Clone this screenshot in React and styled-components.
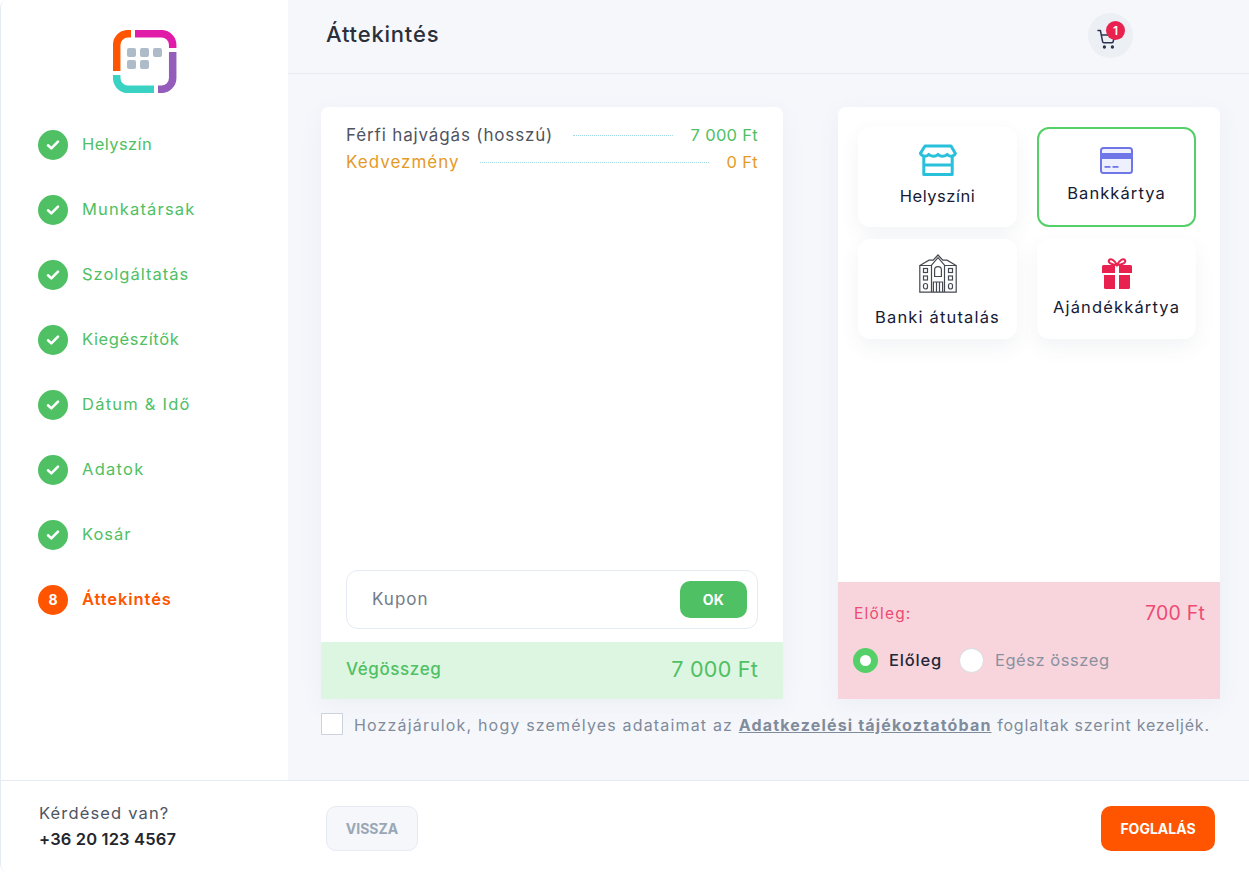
import React from "react";
import styled, { createGlobalStyle } from "styled-components";

const Global = createGlobalStyle`
  html, body { margin: 0; padding: 0; background: #fff; }
  body { font-family: Inter, "Noto Sans", sans-serif; color: #2b2f3a; }
  * { box-sizing: border-box; }
`;

const GREEN = "#4fc063";
const ORANGE = "#ff5500";

const Page = styled.div`
  width: 1249px; height: 872px; display: flex; flex-direction: column;
  overflow: hidden; background: #fff; border-left: 1px solid #e6eaf3;
  border-radius: 8px 0 0 8px;
`;
const Top = styled.div`flex: 0 0 780px; display: flex; min-height: 0;`;
const Sidebar = styled.aside`flex: 0 0 287px; padding-top: 30px; background: #fff;`;
const LogoWrap = styled.div`height: 63px; margin-bottom: 19px; padding-left: 112px;`;
const Steps = styled.div`display: flex; flex-direction: column; padding-left: 37px;`;
const Step = styled.div`height: 65px; display: flex; align-items: center; gap: 14px;`;
const StepDot = styled.span`
  width: 30px; height: 30px; border-radius: 50%; display: flex; align-items: center; justify-content: center;
  background: ${p => (p.$active ? ORANGE : GREEN)}; color: #fff; font-size: 14px; font-weight: 700;
`;
const StepLabel = styled.span`
  font-size: 16.5px; letter-spacing: ${p => p.$spacing}px; white-space: nowrap; padding-bottom: 2px;
  color: ${p => (p.$active ? ORANGE : GREEN)}; font-weight: ${p => (p.$active ? 600 : 400)};
`;

const Main = styled.main`flex: 1; display: flex; flex-direction: column; background: #f5f7fb; min-width: 0;`;
const Header = styled.header`
  flex: 0 0 74px; display: flex; align-items: center; justify-content: space-between;
  padding: 0 116px 3px 38px; border-bottom: 1px solid #e8ebf2;
`;
const Title = styled.h1`margin: 0; padding-bottom: 2px; font-size: 22px; font-weight: 500; color: #2b2f3a; letter-spacing: .8px;`;
const CartButton = styled.div`
  position: relative; width: 45px; height: 45px; border-radius: 50%; background: #eceff3;
  display: flex; align-items: center; justify-content: center; padding: 8px 8px 0 0; color: #2c3350;
`;
const Badge = styled.span`
  position: absolute; left: 18px; top: 8px; width: 19px; height: 19px; border-radius: 50%;
  background: #e8214f; color: #fff; font-size: 12px; font-weight: 600;
  display: flex; align-items: center; justify-content: center;
`;

const Columns = styled.div`display: flex; gap: 55px; padding: 33px 0 0 33px; height: 625px;`;
const Card = styled.section`
  display: flex; flex-direction: column; background: #fff; border-radius: 8px 8px 0 0;
  box-shadow: 0 6px 24px rgba(90, 100, 140, .06);
  width: ${p => p.$width}px;
`;
const Lines = styled.div`flex: 1; padding: 15px 25px 0;`;
const Line = styled.div`
  display: flex; align-items: center; height: 26px; margin-bottom: 1px; font-size: 17px; font-weight: 400;
  color: ${p => p.$color}; letter-spacing: ${p => p.$spacing}px; white-space: nowrap;
`;
const Dots = styled.span`
  flex: 1; height: 0; border-top: 1px dotted #9fd9e6; margin: 0 18px 0 20px;
`;
const Price = styled.span`font-size: 16.5px; letter-spacing: .3px; color: ${p => p.$color};`;

const CouponBox = styled.div`
  margin: 0 25px 13px; height: 59px; border: 1px solid #e6eaf3; border-radius: 12px;
  display: flex; align-items: center; justify-content: space-between; padding: 0 10px 0 25px;
`;
const CouponText = styled.span`font-size: 17px; color: #737b89; letter-spacing: 1px; padding-bottom: 2px;`;
const OkButton = styled.button`
  width: 67px; height: 37px; border: 0; border-radius: 10px; background: ${GREEN}; color: #fff;
  font: 700 14px Inter, sans-serif; letter-spacing: .3px;
`;
const TotalBar = styled.div`
  flex: 0 0 57px; background: #ddf6e2; color: ${GREEN}; display: flex; align-items: center;
  justify-content: space-between; padding: 0 25px 3px;
`;
const TotalLabel = styled.span`font-size: 17px; font-weight: 500; letter-spacing: .6px;`;
const TotalValue = styled.span`font-size: 21.5px; font-weight: 400; letter-spacing: .25px;`;

const Methods = styled.div`
  flex: 1; display: grid; grid-template-columns: 159px 159px; grid-auto-rows: 100px;
  column-gap: 20px; row-gap: 12px; padding: 20px 0 0 20px; align-content: start;
`;
const Method = styled.div`
  border-radius: 12px; background: #fff; display: flex; flex-direction: column; align-items: center;
  padding-top: ${p => p.$top}px; gap: ${p => p.$gap}px;
  border: ${p => (p.$selected ? "2px solid #55d068" : "0")};
  box-shadow: ${p => (p.$selected ? "none" : "0 8px 20px rgba(70, 80, 120, .07)")};
`;
const MethodLabel = styled.span`
  font-size: 16.5px; line-height: 24px; color: #151a35; letter-spacing: ${p => p.$spacing}px; white-space: nowrap;
`;
const Deposit = styled.div`
  flex: 0 0 117px; background: #f8d5dd; padding: 19px 15px 0 16px;
  display: flex; flex-direction: column;
`;
const DepositTop = styled.div`
  display: flex; justify-content: space-between; align-items: center; height: 24px; color: #ee4a72;
`;
const DepositLabel = styled.span`font-size: 15.5px; letter-spacing: 1.2px;`;
const DepositValue = styled.span`font-size: 19.5px; letter-spacing: .2px;`;
const Radios = styled.div`display: flex; align-items: center; margin: 22px 0 0 -1px; height: 26px;`;
const RadioDot = styled.span`
  width: 25px; height: 25px; border-radius: 50%; flex: none; background: #fff;
  border: ${p => (p.$on ? "7px solid #55d068" : "1px solid #d8dbe0")};
`;
const RadioLabel = styled.span`
  margin: 0 17px 0 11px; font-size: 16.5px; white-space: nowrap;
  letter-spacing: ${p => (p.$on ? ".8px" : ".55px")};
  color: ${p => (p.$on ? "#232838" : "#8a919e")}; font-weight: ${p => (p.$on ? 450 : 400)};
`;

const Consent = styled.div`
  display: flex; align-items: center; gap: 11px; padding: 13px 0 0 33px;
  font-size: 16px; color: #808b9b; letter-spacing: 1.17px; white-space: nowrap;
`;
const CheckBox = styled.span`
  width: 22px; height: 22px; background: #fff; border: 1px solid #cdd3dc; flex: none;
`;
const ConsentText = styled.span`padding-top: 3px;`;
const ConsentLink = styled.a`font-weight: 700; color: #808b9b; text-decoration: underline;`;
const ConsentTail = styled.span`letter-spacing: .8px;`;

const Footer = styled.footer`
  flex: 0 0 92px; display: flex; align-items: center; background: #fff;
  border-top: 1px solid #e6eaf3;
`;
const Help = styled.div`flex: 0 0 287px; padding: 0 0 1px 38px; display: flex; flex-direction: column;`;
const HelpText = styled.span`font-size: 16.5px; line-height: 26px; color: #4f5562; letter-spacing: 1.15px;`;
const Phone = styled.span`font-size: 16.5px; line-height: 26px; font-weight: 600; color: #24262d; letter-spacing: .15px;`;
const FooterButtons = styled.div`
  flex: 1; display: flex; justify-content: space-between; padding: 4px 34px 0 38px;
`;
const BackButton = styled.button`
  width: 92px; height: 45px; border-radius: 10px; border: 1px solid #e6eaf3; background: #f5f7fb;
  color: #9aa6b5; font: 700 14px Inter, sans-serif;
`;
const BookButton = styled.button`
  width: 114px; height: 45px; border-radius: 10px; border: 0; background: ${ORANGE};
  color: #fff; font: 700 14px Inter, sans-serif;
`;

const Logo = () => (
  <svg width="64" height="63" viewBox="0 0 64 63" fill="none" strokeWidth="7.5">
    <path d="M18 3.7H15A11.3 11.3 0 0 0 3.7 15V41" stroke="#ff5500" />
    <path d="M22 3.7H48A11.3 11.3 0 0 1 59.7 15V18" stroke="#e01ba8" />
    <path d="M59.7 22V48A11.3 11.3 0 0 1 48 59.3H45" stroke="#945cbb" />
    <path d="M3.7 45V48A11.3 11.3 0 0 0 15 59.3H41" stroke="#3ad3c3" />
    {[[14, 18], [27, 18], [40, 18], [14, 30], [27, 30]].map(([x, y]) => (
      <rect key={x + "-" + y} x={x} y={y} width="9" height="9" rx="2" fill="#aebbc9" />
    ))}
  </svg>
);

const Check = () => (
  <svg width="14" height="12" viewBox="0 0 14 12" fill="none">
    <path d="M2 6.3 5.3 9.4 12 2.6" stroke="#fff" strokeWidth="2.6" strokeLinecap="round" strokeLinejoin="round" />
  </svg>
);

const Cart = () => (
  <svg width="20" height="20" viewBox="0 0 20 20" fill="none" stroke="currentColor" strokeWidth="1.5" strokeLinecap="round" strokeLinejoin="round">
    <path d="M1 1.5h2.4l2.2 11.2c.1.6.6 1 1.2 1h8.2c.6 0 1.1-.4 1.2-1L17.5 6H4.4" />
    <circle cx="7.4" cy="18" r=".9" fill="currentColor" />
    <circle cx="15.4" cy="18" r=".9" fill="currentColor" />
  </svg>
);

const StoreIcon = () => (
  <svg width="38" height="32" viewBox="0 0 38 32" fill="none" stroke="#29c0dc" strokeWidth="3" strokeLinejoin="round">
    <path d="M6 2h26l4.4 7.4c-1.4 3.4-6 3.6-8.2 1-2.2 2.6-6.8 2.6-9.2 0-2.4 2.6-7 2.6-9.2 0-2.2 2.6-6.8 2.4-8.4-1z" />
    <path d="M4.8 12.5V30.5H33.2V12.5M4.8 21H33.2" />
  </svg>
);

const CardIcon = () => (
  <svg width="33" height="27" viewBox="0 0 33 27" fill="none">
    <rect x="1" y="1" width="31" height="25" rx="2.5" fill="#eef0fe" stroke="#6f77e8" strokeWidth="2" />
    <rect x="1" y="6" width="31" height="6" fill="#6f77e8" />
    <rect x="4.5" y="19" width="6" height="1.8" fill="#6f77e8" />
    <rect x="12.5" y="19" width="6" height="1.8" fill="#6f77e8" />
  </svg>
);

const BuildingIcon = () => (
  <svg width="38" height="39" viewBox="0 0 38 39" fill="none" stroke="#444850" strokeWidth="1.2">
    <path d="M.8 38.2V11.5L10 6.2h4.2L19 1l4.8 5.2H28l9.2 5.3v26.7z" />
    <path d="M.8 11.5h11.7M25.5 11.5h11.7M12.5 38V11.2L19 3.6l6.5 7.6V38" />
    <path d="M15.6 22.5v-6.6c0-1.8 1.5-3.2 3.4-3.2s3.4 1.4 3.4 3.2v6.6z" />
    <path d="M14.4 38V28h9.2v10M17.5 28v10M20.5 28v10" />
    <rect x="4.5" y="14.5" width="4" height="4" />
    <rect x="29.5" y="14.5" width="4" height="4" />
    <rect x="4.5" y="22" width="4" height="4" />
    <rect x="29.5" y="22" width="4" height="4" />
    <rect x="4.5" y="29.5" width="4" height="5.5" rx="2" />
    <rect x="29.5" y="29.5" width="4" height="5.5" rx="2" />
  </svg>
);

const GiftIcon = () => (
  <svg width="30" height="31" viewBox="0 0 30 31" fill="none">
    <path d="M15 7C12.5 1.5 8.5.2 7 2.2 5.6 4.4 9.5 7 15 7c5.5 0 9.4-2.6 8-4.8C21.500.2 17.500 1.500 15 7z" stroke="#e8214f" strokeWidth="2" />
    <path d="M0 8.5a1.500 1.500 0 0 1 1.500-1.500H13v8H0zM17 7h11.500A1.500 1.500 0 0 1 30 8.500V15H17zM2 17h11v14H3.500A1.500 1.500 0 0 1 2 29.500zM17 17h11v12.500a1.500 1.500 0 0 1-1.500 1.500H17z" fill="#e8214f" />
  </svg>
);

const steps = [
  ["Helyszín", 0.42],
  ["Munkatársak", 1.15],
  ["Szolgáltatás", 1.0],
  ["Kiegészítők", 0.6],
  ["Dátum & Idő", 1.24],
  ["Adatok", 1.25],
  ["Kosár", 1.0],
];

export default function App() {
  return (
    <Page>
      <Global />
      <Top>
        <Sidebar>
          <LogoWrap><Logo /></LogoWrap>
          <Steps>
            {steps.map(([s, spacing]) => (
              <Step key={s}>
                <StepDot><Check /></StepDot>
                <StepLabel $spacing={spacing}>{s}</StepLabel>
              </Step>
            ))}
            <Step>
              <StepDot $active>8</StepDot>
              <StepLabel $active $spacing={0.92}>Áttekintés</StepLabel>
            </Step>
          </Steps>
        </Sidebar>
        <Main>
          <Header>
            <Title>Áttekintés</Title>
            <CartButton>
              <Cart />
              <Badge>1</Badge>
            </CartButton>
          </Header>
          <Columns>
            <Card $width={462}>
              <Lines>
                <Line $color="#50545f" $spacing={0.85}>
                  Férfi hajvágás (hosszú)<Dots /><Price $color={GREEN}>7 000 Ft</Price>
                </Line>
                <Line $color="#e59a27" $spacing={1}>
                  Kedvezmény<Dots /><Price $color="#e59a27">0 Ft</Price>
                </Line>
              </Lines>
              <CouponBox>
                <CouponText>Kupon</CouponText>
                <OkButton>OK</OkButton>
              </CouponBox>
              <TotalBar>
                <TotalLabel>Végösszeg</TotalLabel>
                <TotalValue>7 000 Ft</TotalValue>
              </TotalBar>
            </Card>
            <Card $width={382}>
              <Methods>
                <Method $top={17} $gap={8}><StoreIcon /><MethodLabel $spacing={0.5}>Helyszíni</MethodLabel></Method>
                <Method $selected $top={18} $gap={7}><CardIcon /><MethodLabel $spacing={1.08}>Bankkártya</MethodLabel></Method>
                <Method $top={15} $gap={12}><BuildingIcon /><MethodLabel $spacing={1.16}>Banki átutalás</MethodLabel></Method>
                <Method $top={19} $gap={6}><GiftIcon /><MethodLabel $spacing={1.15}>Ajándékkártya</MethodLabel></Method>
              </Methods>
              <Deposit>
                <DepositTop>
                  <DepositLabel>Előleg:</DepositLabel>
                  <DepositValue>700 Ft</DepositValue>
                </DepositTop>
                <Radios>
                  <RadioDot $on />
                  <RadioLabel $on>Előleg</RadioLabel>
                  <RadioDot />
                  <RadioLabel>Egész összeg</RadioLabel>
                </Radios>
              </Deposit>
            </Card>
          </Columns>
          <Consent>
            <CheckBox />
            <ConsentText>
              Hozzájárulok, hogy személyes adataimat az <ConsentLink>Adatkezelési tájékoztatóban</ConsentLink> <ConsentTail>foglaltak szerint kezeljék.</ConsentTail>
            </ConsentText>
          </Consent>
        </Main>
      </Top>
      <Footer>
        <Help>
          <HelpText>Kérdésed van?</HelpText>
          <Phone>+36 20 123 4567</Phone>
        </Help>
        <FooterButtons>
          <BackButton>VISSZA</BackButton>
          <BookButton>FOGLALÁS</BookButton>
        </FooterButtons>
      </Footer>
    </Page>
  );
}
